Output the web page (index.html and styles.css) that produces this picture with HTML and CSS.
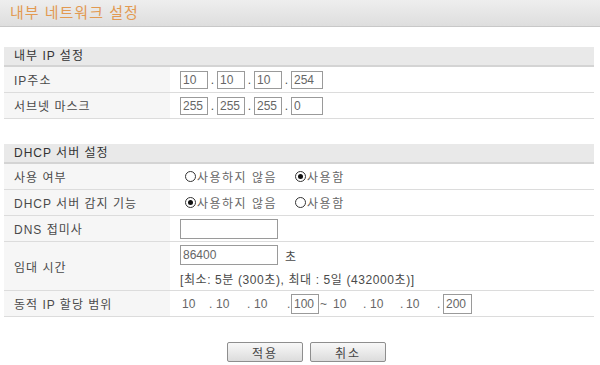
FILE: index.html
```html
<!DOCTYPE html>
<html lang="ko">
<head>
    <meta charset="UTF-8">
    <title>내부 네트워크 설정</title>
    <link rel="stylesheet" href="styles.css">
</head>
<body>
    <div class="page-title">내부 네트워크 설정</div>

    <div class="section">
        <div class="section-head">내부 IP 설정</div>
        <div class="row">
            <div class="label">IP주소</div>
            <div class="value">
                <input class="ip" type="text" value="10"><span class="dot">.</span><input class="ip" type="text" value="10"><span class="dot">.</span><input class="ip" type="text" value="10"><span class="dot">.</span><input class="ip wide" type="text" value="254">
            </div>
        </div>
        <div class="row">
            <div class="label">서브넷 마스크</div>
            <div class="value">
                <input class="ip" type="text" value="255"><span class="dot">.</span><input class="ip" type="text" value="255"><span class="dot">.</span><input class="ip" type="text" value="255"><span class="dot">.</span><input class="ip wide" type="text" value="0">
            </div>
        </div>
    </div>

    <div class="section">
        <div class="section-head">DHCP 서버 설정</div>
        <div class="row">
            <div class="label">사용 여부</div>
            <div class="value">
                <label class="radio"><input type="radio" name="use">사용하지 않음</label>
                <label class="radio"><input type="radio" name="use" checked>사용함</label>
            </div>
        </div>
        <div class="row">
            <div class="label">DHCP 서버 감지 기능</div>
            <div class="value">
                <label class="radio"><input type="radio" name="detect" checked>사용하지 않음</label>
                <label class="radio"><input type="radio" name="detect">사용함</label>
            </div>
        </div>
        <div class="row">
            <div class="label">DNS 접미사</div>
            <div class="value">
                <input class="text-field" type="text" value="">
            </div>
        </div>
        <div class="row tall">
            <div class="label">임대 시간</div>
            <div class="value stack">
                <div class="line"><input class="text-field" type="text" value="86400"><span class="unit">초</span></div>
                <div class="hint">[최소: 5분 (300초), 최대 : 5일 (432000초)]</div>
            </div>
        </div>
        <div class="row">
            <div class="label">동적 IP 할당 범위</div>
            <div class="value range">
                <span>10</span><span>.</span><span>10</span><span>.</span><span>10</span><span>.</span><input class="ip range-ip" type="text" value="100"><span class="tilde">~</span><span>10</span><span>.</span><span>10</span><span>.</span><span>10</span><span>.</span><input class="ip range-ip" type="text" value="200">
            </div>
        </div>
    </div>

    <div class="buttons">
        <button class="btn">적용</button>
        <button class="btn">취소</button>
    </div>
</body>
</html>
```

FILE: styles.css
```css
body {
    margin: 0;
    background: #fff;
    font-family: "Liberation Sans", "Noto Sans CJK KR", sans-serif;
    font-size: 12px;
    color: #4a4a4a;
}
.page-title {
    height: 26px;
    line-height: 26px;
    padding-left: 10px;
    background: linear-gradient(#eeeeee, #dedede);
    border-bottom: 1px solid #c8c8c8;
    color: #e29a52;
    font-size: 15px;
    letter-spacing: 1px;
}
.section {
    margin: 20px 6px 0 4px;
}
.section + .section {
    margin-top: 25px;
}
.section-head {
    height: 18px;
    line-height: 18px;
    padding-left: 10px;
    background: #e9e9e9;
    border-bottom: 2px solid #d4d4d4;
    color: #333;
    letter-spacing: 1px;
}
.row {
    display: flex;
    height: 25px;
    border-bottom: 1px solid #dcdcdc;
}
.row.tall {
    height: 48px;
}
.label {
    width: 156px;
    padding-left: 10px;
    background: #f6f6f6;
    display: flex;
    align-items: center;
    letter-spacing: 1px;
}
.value {
    flex: 1;
    padding-left: 10px;
    display: flex;
    align-items: center;
}
.ip {
    width: 22px;
    height: 16px;
    padding: 0 2px;
    border: 1px solid #9a9a9a;
    font-family: inherit;
    font-size: 12px;
    color: #666;
    outline: none;
    margin: 0;
}
.ip.wide {
    width: 26px;
}
.dot {
    width: 9px;
    text-align: center;
}
.radio {
    display: flex;
    align-items: center;
    margin-right: 13px;
    letter-spacing: 1.5px;
    color: #666;
}
.radio input {
    appearance: none;
    width: 11px;
    height: 11px;
    margin: 0 1px 0 5px;
    border: 1px solid #333;
    border-radius: 50%;
    position: relative;
}
.radio input:checked::after {
    content: "";
    position: absolute;
    left: 2px;
    top: 2px;
    width: 5px;
    height: 5px;
    border-radius: 50%;
    background: #111;
}
.text-field {
    width: 92px;
    height: 18px;
    padding: 0 2px;
    margin: 0;
    border: 1px solid #9a9a9a;
    font-family: inherit;
    font-size: 12px;
    color: #666;
    outline: none;
}
.stack {
    flex-direction: column;
    align-items: flex-start;
    justify-content: center;
    gap: 5px;
}
.line {
    display: flex;
    align-items: center;
}
.unit {
    margin-left: 7px;
}
.hint {
    letter-spacing: 0.6px;
}
.range {
    display: grid;
    grid-template-columns: 27px 7px 31px 7px 33px 4px 28px 14px 30px 7px 30px 6px 31px 6px 29px;
    align-content: center;
    padding-left: 12px;
    color: #666;
}
.range-ip {
    width: 100%;
    height: 20px;
    box-sizing: border-box;
}
.tilde {
    padding-left: 1px;
}
.buttons {
    display: flex;
    justify-content: center;
    gap: 7px;
    margin-top: 25px;
    padding-left: 13px;
}
.btn {
    width: 76px;
    height: 20px;
    border: 1px solid #8e8e8e;
    border-radius: 2px;
    background: linear-gradient(#f8f8f8, #dcdcdc);
    font-family: inherit;
    font-size: 12px;
    color: #444;
    letter-spacing: 2px;
    padding: 0;
}
```
